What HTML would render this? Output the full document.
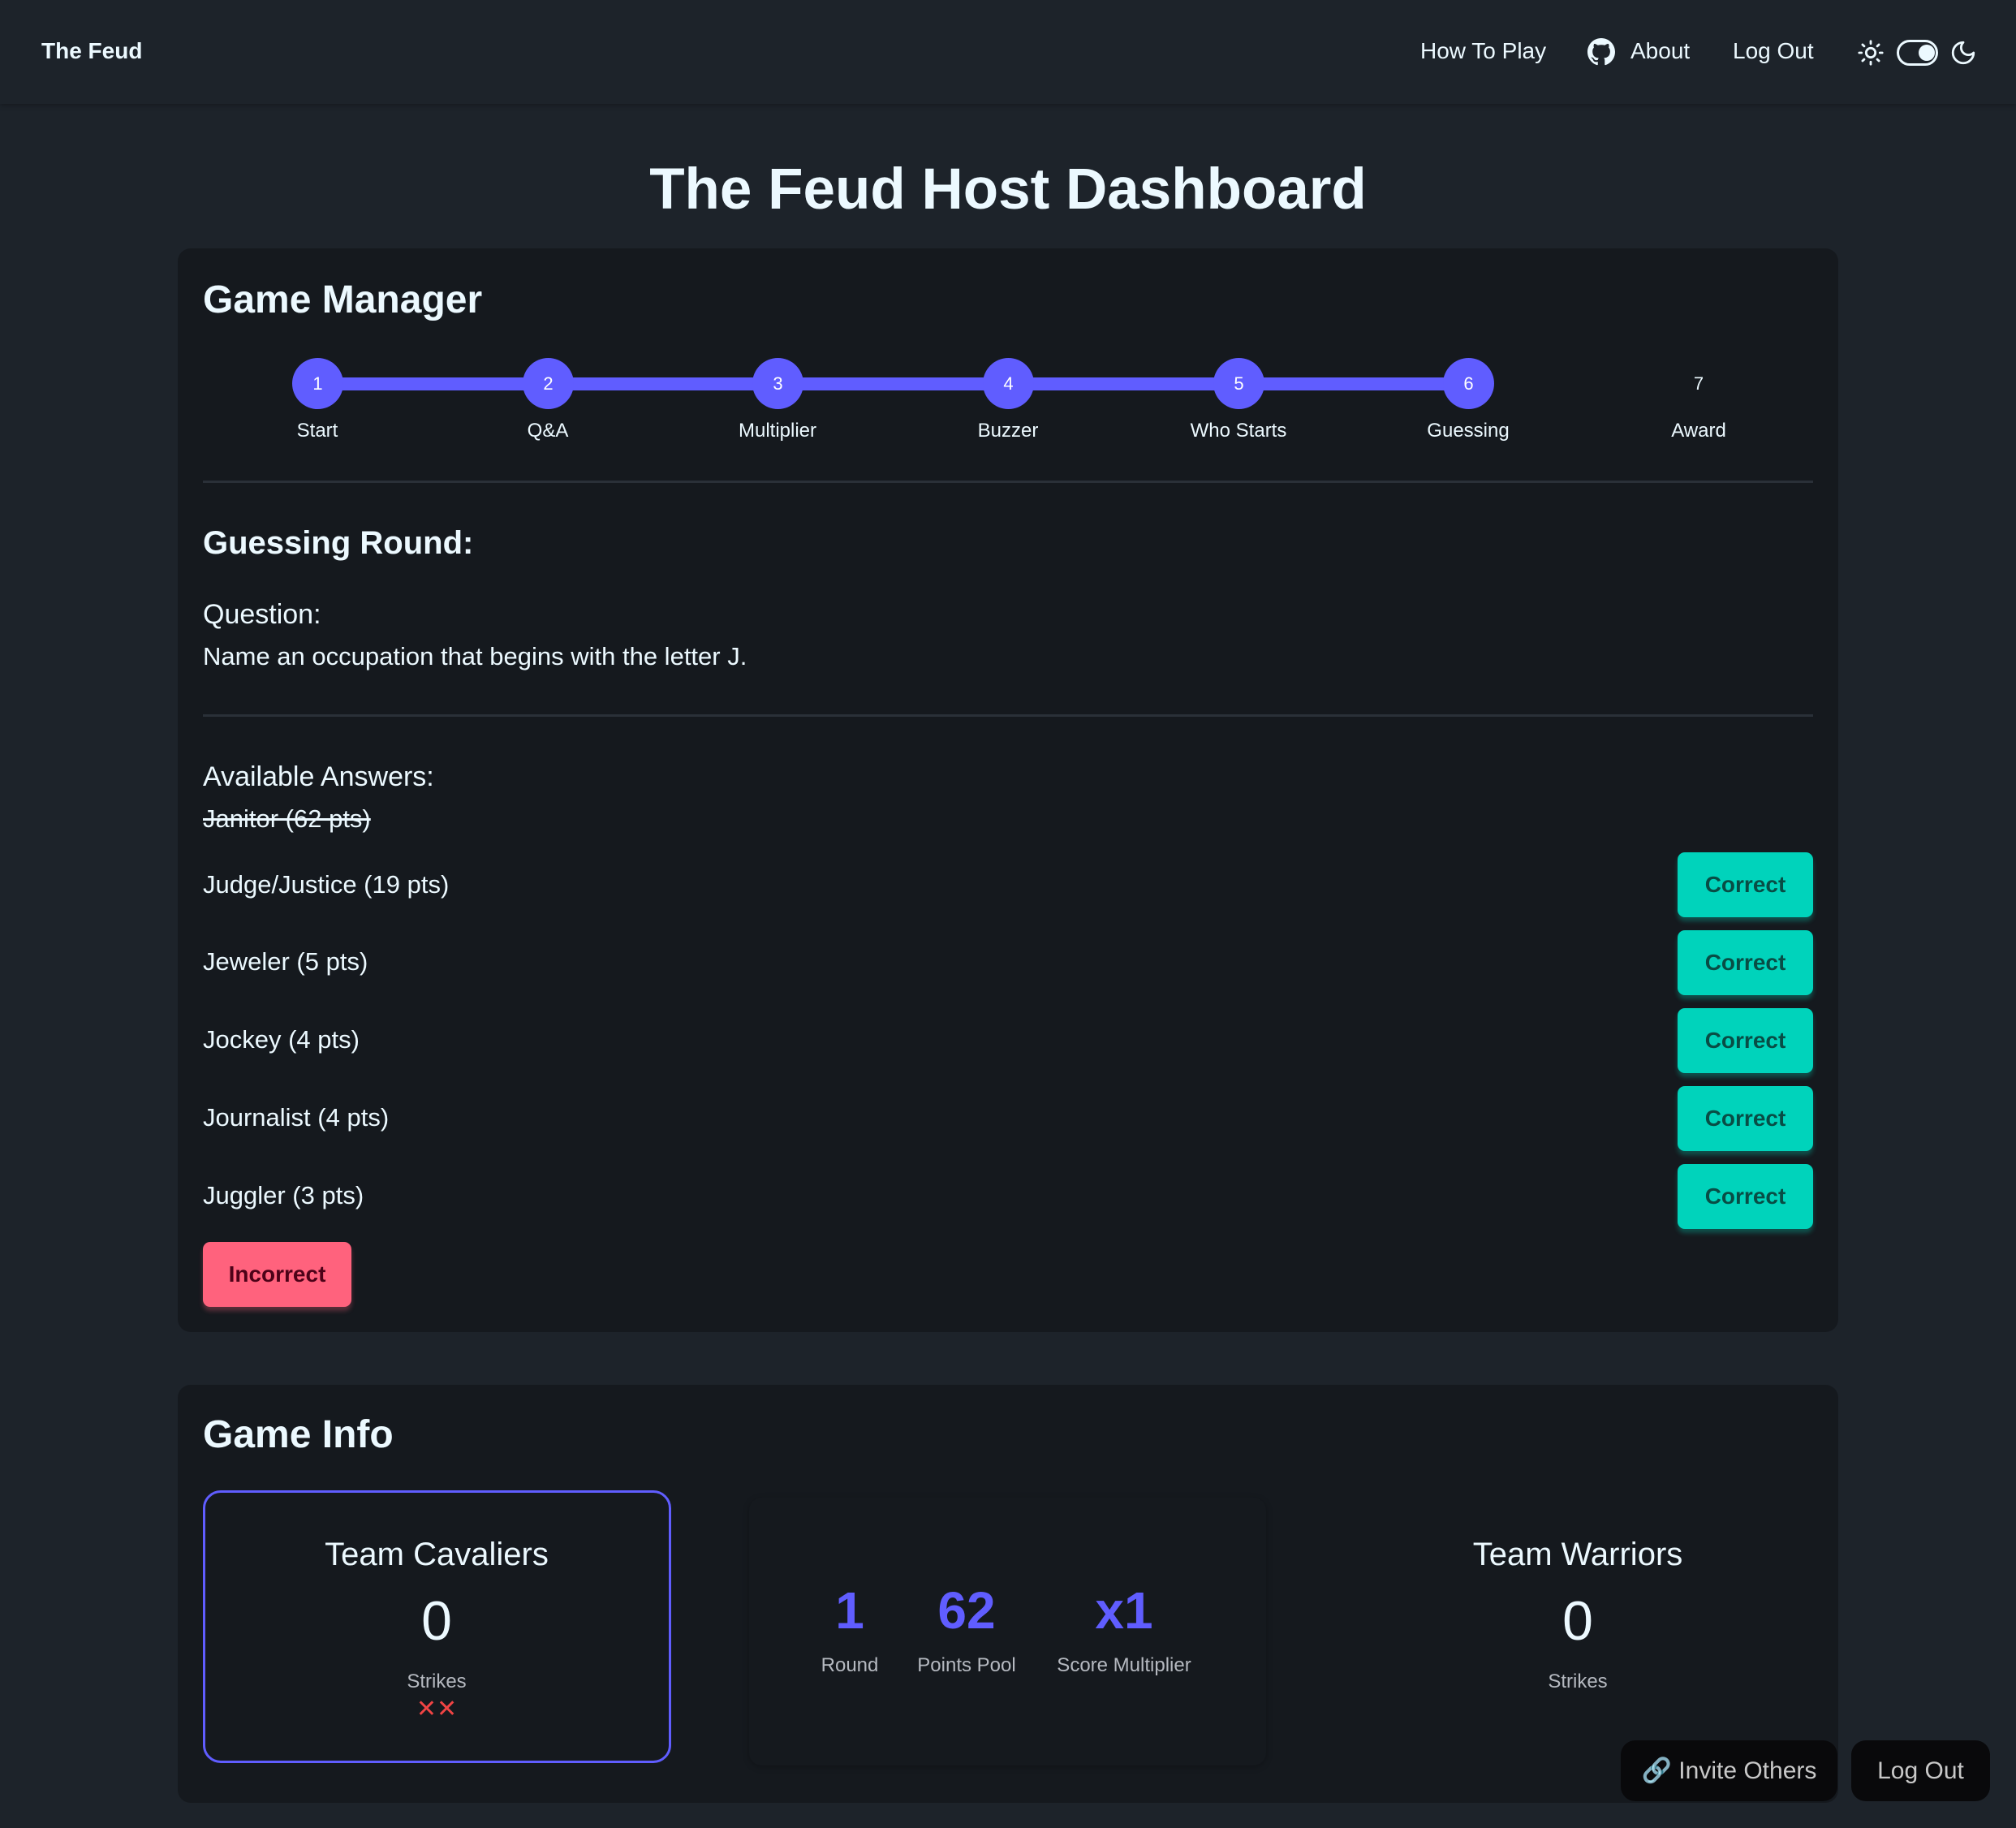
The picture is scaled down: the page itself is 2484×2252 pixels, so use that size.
<!DOCTYPE html>
<html><head><meta charset="utf-8"><style>
*{box-sizing:border-box;margin:0;padding:0}
body{width:2484px;height:2252px;background:#1d232a;color:#ecf9ff;font-family:"Liberation Sans",sans-serif;position:relative;overflow:hidden}
.abs{position:absolute}
.nav{position:absolute;left:0;top:0;width:2484px;height:128px;background:#1d232a;box-shadow:0 2px 6px rgba(0,0,0,.25)}
.t{position:absolute;white-space:nowrap;line-height:1}
.card{position:absolute;left:219px;width:2046px;background:#15191e;border-radius:16px}
.circ{position:absolute;width:63px;height:63px;border-radius:50%;background:#605dff;color:#fff;font-size:22px;display:flex;align-items:center;justify-content:center;top:441px}
.lab{position:absolute;font-size:24px;top:517px;transform:translateX(-50%);white-space:nowrap}
.hr{position:absolute;left:250px;width:1984px;height:3px;background:#2a3038}
.ans{position:absolute;left:250px;font-size:31px;white-space:nowrap}
.btn{position:absolute;left:2067px;width:167px;height:80px;border-radius:9px;background:#00d3bb;color:#084d45;font-weight:bold;font-size:28px;display:flex;align-items:center;justify-content:center;box-shadow:0 5px 6px rgba(0,211,187,.3)}
.stat{position:absolute;transform:translateX(-50%);text-align:center;white-space:nowrap}
.stat b{display:block;color:#605dff;font-size:64px;line-height:1}
.stat span{display:block;color:#b5b9c0;font-size:24px;margin-top:22px}
.fb{position:absolute;top:2144px;height:75px;background:#09090b;border-radius:18px;color:#c8c8c8;font-size:30px;display:flex;align-items:center;justify-content:center}
</style></head><body>
<div class="nav"></div>
<div class="t" style="left:51px;top:49px;font-size:28px;font-weight:bold">The Feud</div>
<div class="t" style="left:1750px;top:49px;font-size:28px">How To Play</div>
<svg class="abs" style="left:1956px;top:47px" width="34" height="34" viewBox="0 0 16 16"><path fill="#ecf9ff" d="M8 0C3.58 0 0 3.58 0 8c0 3.540 2.290 6.530 5.470 7.590.4.07.55-.17.55-.38 0-.19-.01-.82-.01-1.490-2.010.37-2.530-.49-2.690-.94-.09-.23-.48-.94-.82-1.130-.28-.15-.68-.52-.01-.53.63-.01 1.080.58 1.230.82.72 1.210 1.870.87 2.330.66.07-.52.28-.87.51-1.070-1.780-.2-3.640-.89-3.640-3.950 0-.87.31-1.590.82-2.150-.08-.2-.36-1.020.08-2.120 0 0 .67-.21 2.200.82.64-.18 1.320-.27 2-.27.68 0 1.360.09 2 .27 1.530-1.040 2.200-.82 2.200-.82.44 1.100.16 1.920.08 2.120.51.56.82 1.270.82 2.150 0 3.070-1.870 3.750-3.650 3.950.29.25.54.73.54 1.480 0 1.070-.01 1.930-.01 2.200 0 .21.15.46.55.38A8.013 8.013 0 0016 8c0-4.420-3.580-8-8-8z"/></svg>
<div class="t" style="left:2009px;top:49px;font-size:28px">About</div>
<div class="t" style="left:2135px;top:49px;font-size:28px">Log Out</div>
<svg class="abs" style="left:2288px;top:48px" width="34" height="34" viewBox="0 0 24 24" fill="none" stroke="#ecf9ff" stroke-width="2" stroke-linecap="round"><circle cx="12" cy="12" r="4"/><path d="M12 2v2M12 20v2M4.9 4.9l1.4 1.4M17.7 17.7l1.4 1.4M2 12h2M20 12h2M6.3 17.7l-1.4 1.4M19.1 4.9l-1.4 1.4"/></svg>
<div class="abs" style="left:2337px;top:49px;width:51px;height:32px;border:3px solid #ecf9ff;border-radius:16px"><div class="abs" style="left:24px;top:3px;width:20px;height:20px;border-radius:50%;background:#ecf9ff"></div></div>
<svg class="abs" style="left:2402px;top:48px" width="34" height="34" viewBox="0 0 24 24" fill="none" stroke="#ecf9ff" stroke-width="2" stroke-linecap="round" stroke-linejoin="round"><path d="M12 3a6 6 0 0 0 9 9 9 9 0 1 1-9-9z"/></svg>

<div class="t" style="left:0;width:2484px;text-align:center;top:198px;font-size:71px;font-weight:bold">The Feud Host Dashboard</div>

<div class="card" style="top:306px;height:1335px"></div>
<div class="t" style="left:250px;top:346px;font-size:48px;font-weight:bold">Game Manager</div>
<div class="abs" style="left:391px;top:465px;width:1418px;height:16px;background:#605dff"></div>
<div class="circ" style="left:360px">1</div><div class="circ" style="left:644px">2</div><div class="circ" style="left:927px">3</div><div class="circ" style="left:1211px">4</div><div class="circ" style="left:1495px">5</div><div class="circ" style="left:1778px">6</div>
<div class="t" style="left:2093px;top:462px;font-size:22px;transform:translateX(-50%)">7</div>
<div class="lab" style="left:391px">Start</div><div class="lab" style="left:675px">Q&amp;A</div><div class="lab" style="left:958px">Multiplier</div><div class="lab" style="left:1242px">Buzzer</div><div class="lab" style="left:1526px">Who Starts</div><div class="lab" style="left:1809px">Guessing</div><div class="lab" style="left:2093px">Award</div>
<div class="hr" style="top:592px"></div>
<div class="t" style="left:250px;top:649px;font-size:40px;font-weight:bold">Guessing Round:</div>
<div class="t" style="left:250px;top:740px;font-size:34px">Question:</div>
<div class="t" style="left:250px;top:793px;font-size:31px">Name an occupation that begins with the letter J.</div>
<div class="hr" style="top:880px"></div>
<div class="t" style="left:250px;top:940px;font-size:34px">Available Answers:</div>
<div class="t" style="left:250px;top:993px;font-size:31px;text-decoration:line-through">Janitor (62 pts)</div>
<div class="ans t" style="top:1074px">Judge/Justice (19 pts)</div>
<div class="ans t" style="top:1169px">Jeweler (5 pts)</div>
<div class="ans t" style="top:1265px">Jockey (4 pts)</div>
<div class="ans t" style="top:1361px">Journalist (4 pts)</div>
<div class="ans t" style="top:1457px">Juggler (3 pts)</div>
<div class="btn" style="top:1050px">Correct</div>
<div class="btn" style="top:1146px">Correct</div>
<div class="btn" style="top:1242px">Correct</div>
<div class="btn" style="top:1338px">Correct</div>
<div class="btn" style="top:1434px">Correct</div>
<div class="btn" style="top:1530px;left:250px;width:183px;background:#ff627d;color:#4d0218;box-shadow:0 5px 6px rgba(255,98,125,.3)">Incorrect</div>

<div class="card" style="top:1706px;height:515px"></div>
<div class="t" style="left:250px;top:1744px;font-size:48px;font-weight:bold">Game Info</div>
<div class="abs" style="left:250px;top:1836px;width:577px;height:336px;border:3px solid #605dff;border-radius:22px"></div>
<div class="abs" style="left:923px;top:1845px;width:637px;height:330px;border-radius:16px;box-shadow:0 2px 8px rgba(0,0,0,.25)"></div>
<div class="stat" style="left:538px;top:1893px"><div style="font-size:40px">Team Cavaliers</div><div style="font-size:68px;margin-top:20px">0</div><div style="font-size:24px;color:#b5b9c0;margin-top:22px">Strikes</div><div style="font-size:30px;color:#f04444;margin-top:2px">✕✕</div></div>
<div class="stat" style="left:1944px;top:1893px"><div style="font-size:40px">Team Warriors</div><div style="font-size:68px;margin-top:20px">0</div><div style="font-size:24px;color:#b5b9c0;margin-top:22px">Strikes</div></div>
<div class="stat" style="left:1047px;top:1952px"><b>1</b><span>Round</span></div>
<div class="stat" style="left:1191px;top:1952px"><b>62</b><span>Points Pool</span></div>
<div class="stat" style="left:1385px;top:1952px"><b>x1</b><span>Score Multiplier</span></div>

<div class="fb" style="left:1997px;width:267px">🔗 Invite Others</div>
<div class="fb" style="left:2281px;width:171px">Log Out</div>
</body></html>
